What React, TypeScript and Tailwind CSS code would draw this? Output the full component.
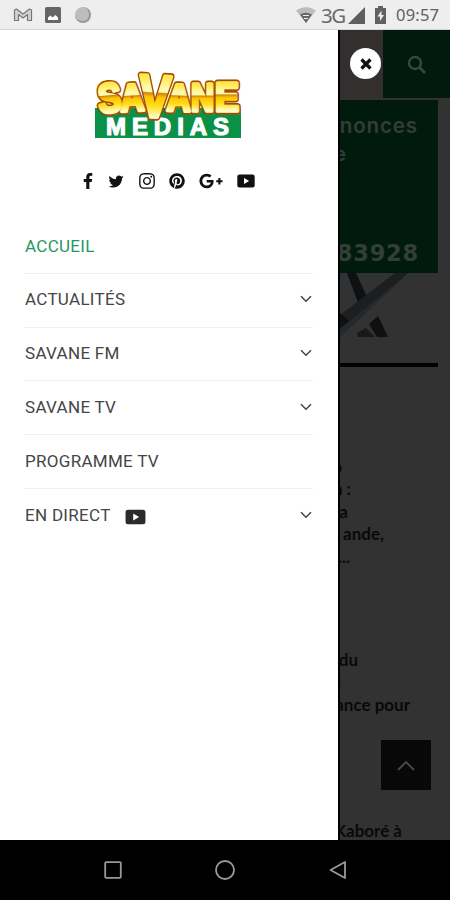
import { ReactNode } from 'react';
import { FaFacebookF, FaTwitter, FaInstagram, FaPinterest, FaGooglePlusG } from 'react-icons/fa';

interface MenuEntry {
  label: string;
  active?: boolean;
  expandable?: boolean;
  live?: boolean;
}

const MENU: MenuEntry[] = [
  { label: 'ACCUEIL', active: true },
  { label: 'ACTUALITÉS', expandable: true },
  { label: 'SAVANE FM', expandable: true },
  { label: 'SAVANE TV', expandable: true },
  { label: 'PROGRAMME TV' },
  { label: 'EN DIRECT', expandable: true, live: true },
];

// letter, x, baseline, size, horizontal fit, rotation
const LOGO_LETTERS: [string, number, number, number, number, number][] = [
  ['S', 5, 52, 41, 23, -5],
  ['A', 27, 51, 38, 24, -3],
  ['V', 46, 57, 60, 32, 3],
  ['A', 74, 51, 38, 24, 2],
  ['N', 98, 51, 38, 23, 0],
  ['E', 122, 51, 40, 24, 0],
];

function YoutubeIcon({ className }: { className: string }) {
  return (
    <svg viewBox="0 0 18 14" className={className}>
      <rect x="0.3" y="0.6" width="17.4" height="12.8" rx="2.2" fill="currentColor" />
      <path d="M7 4v6l5.2-3z" fill="#fff" />
    </svg>
  );
}

function StatusBar() {
  return (
    <header className="flex h-[30px] shrink-0 items-center border-b border-[#d4d4d4] bg-[#eeeeee] pt-px">
      <svg viewBox="0 0 20 16" className="ml-[13px] h-4 w-5">
        <path
          d="M1.5 13.5V3l2-1L10 7l6.500-5 2 1v10.500h-4V7.500L10 11 5.500 7.500v6z"
          fill="#d2d2d2"
          stroke="#777"
          strokeWidth="1.2"
          strokeLinejoin="round"
        />
      </svg>
      <svg viewBox="0 0 16 16" className="ml-[12px] h-4 w-4">
        <rect width="16" height="16" rx="1.5" fill="#666" />
        <path d="M3 13v-2.500l2.500-2 2 2 3-2.500 2.500 2.500V13z" fill="#fff" />
      </svg>
      <span className="ml-[14px] h-4 w-4 rounded-full border-r-2 border-b-2 border-[#979797] bg-[#bdbdbd]" />

      <svg viewBox="0 0 20 18" className="ml-auto h-[18px] w-5">
        <path d="M0 4.500Q10-2.500 20 4.500L10 17z" fill="#bcbcbc" />
        <path d="M4 8.500Q10 5 16 8.500L10 17z" fill="#666" />
        <path d="M7 9.500h6M8 12.500h4" stroke="#eee" strokeWidth="1.100" />
      </svg>
      <span className="ml-[5px] w-[24px] pt-px font-['Noto_Sans',sans-serif] text-[20.500px] leading-none tracking-[-1.500px] text-[#6a6a6a]">
        3G
      </span>
      <svg viewBox="0 0 17 17" className="ml-[3px] h-[17px] w-[17px]">
        <path d="M17 0v17H0z" fill="#5e5e5e" />
      </svg>
      <svg viewBox="0 0 11 18" className="ml-[10px] h-[18px] w-[11px]">
        <path d="M3 0h5v2h3v16H0V2h3z" fill="#606060" />
        <path d="M6.500 4.500 2.500 10.500H5v4.500l4-6H6.500z" fill="#eee" />
      </svg>
      <span className="mr-[10px] ml-[10px] w-[44px] pt-px font-['Noto_Sans',sans-serif] text-[16.500px] leading-none tracking-[0.200px] whitespace-nowrap text-[#606060]">
        09:57
      </span>
    </header>
  );
}

function Logo() {
  return (
    <svg viewBox="0 0 150 80" className="h-[80px] w-[150px] overflow-visible" fontFamily="'Liberation Sans', sans-serif">
      <defs>
        <linearGradient id="gold" x1="0" y1="0" x2="0" y2="1">
          <stop offset="0.2" stopColor="#ffe84a" />
          <stop offset="0.36" stopColor="#fff9a8" />
          <stop offset="0.43" stopColor="#fff9a8" />
          <stop offset="0.45" stopColor="#cf8416" />
          <stop offset="0.51" stopColor="#ffc400" />
          <stop offset="0.65" stopColor="#ffe01e" />
          <stop offset="0.8" stopColor="#fffbc0" />
        </linearGradient>
      </defs>
      <rect x="2" y="48" width="146" height="30" fill="#0a9147" />
      <text
        x="13"
        y="75"
        textLength="123"
        fontSize="24"
        fontWeight="700"
        fill="#fff"
        stroke="#fff"
        strokeWidth="1.200"
      >
        MEDIAS
      </text>
      {/* outline pass first so neighbouring strokes stay behind the gold */}
      {LOGO_LETTERS.map(([char, x, y, size, width, turn], i) => (
        <text
          key={`o${i}`}
          x={x}
          y={y}
          fontSize={size}
          fontWeight="700"
          textLength={width}
          lengthAdjust="spacingAndGlyphs"
          transform={`rotate(${turn} ${x + width / 2} ${y - size / 3})`}
          fill="#a34c05"
          stroke="#a34c05"
          strokeWidth="7"
          strokeLinejoin="round"
        >
          {char}
        </text>
      ))}
      {LOGO_LETTERS.map(([char, x, y, size, width, turn], i) => (
        <text
          key={`g${i}`}
          x={x}
          y={y}
          fontSize={size}
          fontWeight="700"
          textLength={width}
          lengthAdjust="spacingAndGlyphs"
          transform={`rotate(${turn} ${x + width / 2} ${y - size / 3})`}
          fill="url(#gold)"
          stroke="url(#gold)"
          strokeWidth="3.600"
          strokeLinejoin="round"
        >
          {char}
        </text>
      ))}
    </svg>
  );
}

function MenuRow({ item }: { item: MenuEntry }) {
  return (
    <li className="flex h-[53.800px] items-center border-b border-[#efefef] last:border-b-0">
      <a className={item.active ? 'text-[#259862]' : 'text-[#454545]'}>{item.label}</a>
      {item.live && <YoutubeIcon className="mt-[2px] ml-[14px] h-4 w-[21px] text-[#2b2b2b]" />}
      {item.expandable && (
        <svg viewBox="0 0 12 8" className="mr-[1px] mb-[2px] ml-auto h-2 w-3">
          <path d="m1 1.300 5 5 5-5" fill="none" stroke="#444" strokeWidth="1.500" />
        </svg>
      )}
    </li>
  );
}

function Drawer() {
  return (
    <aside className="flex w-[338px] shrink-0 flex-col bg-white">
      <div className="mt-[30px] ml-[93px]">
        <Logo />
      </div>
      <div className="mt-[33px] ml-[83px] flex h-4 items-center text-[#111]">
        <FaFacebookF className="h-4 w-[10px]" />
        <FaTwitter className="ml-[15px] h-[15px] w-4" />
        <FaInstagram className="ml-[14px] h-[18px] w-[18px]" />
        <FaPinterest className="ml-[13px] h-4 w-4" />
        <FaGooglePlusG className="ml-[14px] h-6 w-6" />
        <YoutubeIcon className="ml-[14px] h-[14px] w-[18px]" />
      </div>
      <ul className="mt-[31px] mr-[25px] ml-[25px] font-[Roboto,sans-serif] text-[17px] tracking-[0.300px]">
        {MENU.map((item) => (
          <MenuRow key={item.label} item={item} />
        ))}
      </ul>
    </aside>
  );
}

// Text lines that run out from under the drawer, aligned on their right end.
function Line({ width, children }: { width: string; children?: ReactNode }) {
  return (
    <div className={`flex h-[22.500px] items-center justify-end whitespace-nowrap ${width}`}>
      {children}
    </div>
  );
}

function DimmedPage() {
  return (
    <main className="relative flex min-w-0 flex-1 flex-col overflow-hidden border-l-2 border-black bg-[#323232] font-[Lato,sans-serif] text-[17px] font-bold text-[#090909]">
      <div className="flex h-[68px] shrink-0">
        <div className="flex w-[43px] justify-end bg-[#332f2f] pt-[18px] pr-[2px]">
          <button className="flex h-[31px] w-[31px] shrink-0 items-center justify-center rounded-full bg-white" aria-label="Fermer">
            <svg viewBox="0 0 12 12" className="h-3 w-3">
              <path d="m1.500 1.500 9 9m0-9-9 9" stroke="#111" strokeWidth="3.200" />
            </svg>
          </button>
        </div>
        <div className="flex flex-1 justify-center bg-[#001b0e] pt-[25px]">
          <svg viewBox="0 0 20 20" className="h-5 w-5">
            <circle cx="8" cy="8" r="6" fill="none" stroke="#3b4640" strokeWidth="2.400" />
            <path d="m12.500 12.500 5.500 5.500" stroke="#3b4640" strokeWidth="2.600" />
          </svg>
        </div>
      </div>

      <section className="mt-[2px] flex h-[173px] w-[98px] shrink-0 flex-col bg-[#001b0e] font-['DejaVu_Sans',sans-serif] text-[#343d38]">
        <div className="mt-[12px] flex h-[28px] w-[78px] items-center justify-end font-[Inter,sans-serif] text-[20.500px] font-semibold tracking-[0.900px]">
          nonces
        </div>
        <div className="flex h-[28px] w-[6px] items-center justify-end font-[Inter,sans-serif] text-[20px] font-semibold">
          e
        </div>
        <div className="mt-[72px] flex h-[28px] w-[79px] items-center justify-end text-[22.500px] tracking-[0.800px]">
          83928
        </div>
      </section>

      <svg viewBox="0 0 98 66" className="h-[66px] w-[98px] shrink-0">
        <path d="M0 0h10l18 28-16 14z" fill="#303336" />
        <path d="M7 0h9l12 26-8 9z" fill="#0e1012" />
        <path d="M55 0h13L0 64V42z" fill="#1c1e20" />
        <path d="M64 4 0 64V56z" fill="#26292c" />
        <path d="M0 40l9 8-9 7z" fill="#0e1012" />
        <path d="m29 51 9-8 10 21H37z" fill="#0e1012" />
        <path d="m17 60 9-5 9 9H18z" fill="#17191b" />
      </svg>

      <hr className="mt-[24px] h-[4px] w-[98px] shrink-0 border-0 bg-black" />

      <div className="mt-[88px] leading-none">
        <Line width="w-[2px]">o</Line>
        <Line width="w-[11px]">n :</Line>
        <Line width="w-[8px]">a</Line>
        <Line width="w-[44px]">ande,</Line>
        <Line width="w-[10px]">...</Line>
      </div>
      <div className="mt-[81px] leading-none">
        <Line width="w-[18px]">du</Line>
        <Line width="w-[1px]">l</Line>
        <Line width="w-[70px]">ance pour</Line>
      </div>
      <div className="mt-[103px] leading-none">
        <Line width="w-[62px]">Kaboré à</Line>
      </div>

      {/* back to top */}
      <button className="absolute right-[19px] bottom-[50px] flex h-[50px] w-[50px] items-center justify-center bg-[#080808]" aria-label="Haut de page">
        <svg viewBox="0 0 18 11" className="h-[11px] w-[18px]">
          <path d="m1 10 8-8 8 8" fill="none" stroke="#484848" strokeWidth="1.800" />
        </svg>
      </button>
    </main>
  );
}

function NavBar() {
  return (
    <nav className="flex h-[60px] shrink-0 justify-between bg-black px-[103px] pt-[20px]">
      <svg viewBox="0 0 20 20" className="h-5 w-5" fill="none" stroke="#999" strokeWidth="1.800">
        <rect x="2.200" y="2.200" width="15.600" height="15.600" rx="1" />
      </svg>
      <svg viewBox="0 0 20 20" className="h-5 w-5" fill="none" stroke="#999" strokeWidth="1.800">
        <circle cx="10" cy="10" r="9" />
      </svg>
      <svg viewBox="0 0 20 20" className="h-5 w-5" fill="none" stroke="#999" strokeWidth="1.800" strokeLinejoin="round">
        <path d="M18 2v16L3.500 10z" />
      </svg>
    </nav>
  );
}

export default function App() {
  return (
    <div className="flex h-[900px] w-[450px] flex-col overflow-hidden bg-white">
      <StatusBar />
      <div className="flex h-[810px] shrink-0">
        <Drawer />
        <DimmedPage />
      </div>
      <NavBar />
    </div>
  );
}
